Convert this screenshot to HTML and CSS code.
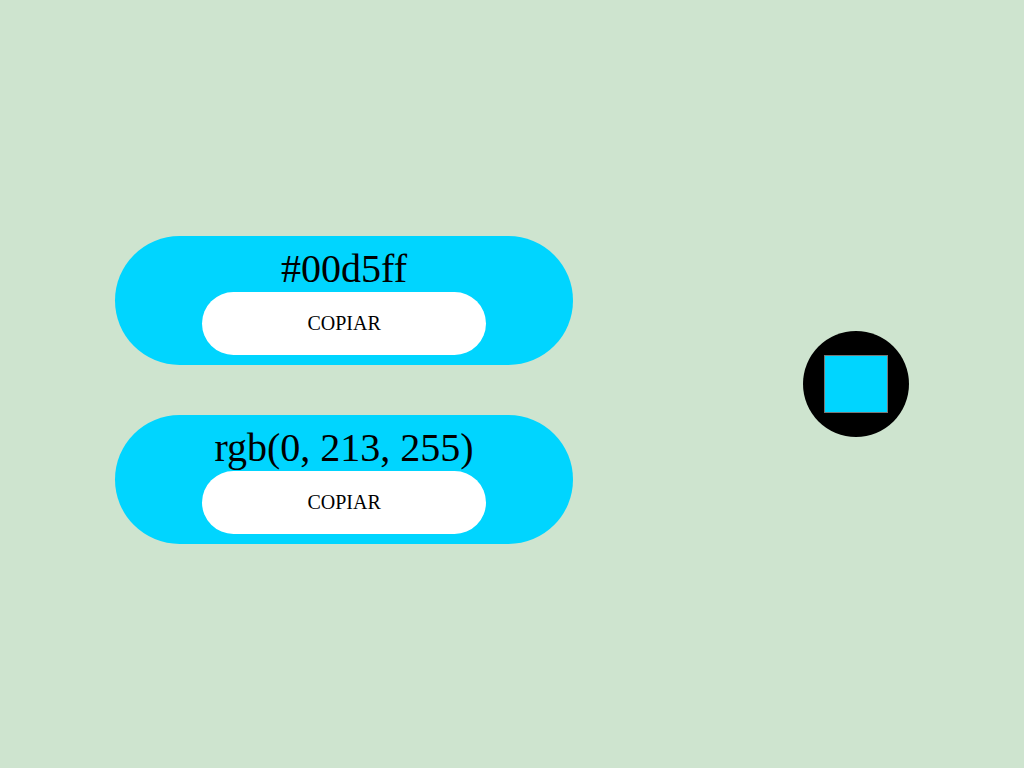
FILE: index.html
```html
<!DOCTYPE html>
<html lang="es">
<head>
<meta charset="utf-8">
<meta name="viewport" content="width=device-width, initial-scale=1">
<title>Selector de color</title>
<link rel="stylesheet" href="styles.css">
</head>
<body>
<main class="layout">
  <section class="codes">
    <div class="card">
      <p class="value">#00d5ff</p>
      <button class="copy" type="button">COPIAR</button>
    </div>
    <div class="card">
      <p class="value">rgb(0, 213, 255)</p>
      <button class="copy" type="button">COPIAR</button>
    </div>
  </section>
  <section class="picker">
    <input class="color" type="color" value="#00d5ff" aria-label="Color">
  </section>
</main>
</body>
</html>
```
FILE: styles.css
```css
* {
  box-sizing: border-box;
}

body {
  margin: 0;
  background: #cee4cf;
  color: #000;
  font-family: "Times New Roman", "Liberation Serif", serif;
}

.layout {
  display: grid;
  grid-template-columns: 67.2% 1fr;
  align-items: center;
  min-height: 100vh;
}

.codes {
  display: flex;
  flex-direction: column;
  align-items: center;
  gap: 50px;
  padding-top: 12px;
}

.card {
  display: flex;
  flex-direction: column;
  align-items: center;
  width: 458px;
  max-width: 90%;
  padding: 10px;
  border-radius: 65px;
  background: #00d5ff;
}

.value {
  margin: 0;
  font-size: 40px;
  line-height: 46px;
}

.copy {
  width: 284px;
  max-width: 100%;
  padding: 20px;
  border: 0;
  border-radius: 32px;
  background: #fff;
  color: #000;
  font-family: inherit;
  font-size: 20px;
  line-height: 23px;
  cursor: pointer;
}

.picker {
  display: flex;
  justify-content: center;
}

.color {
  width: 106px;
  height: 106px;
  padding: 20px 19px;
  border: 0;
  border-radius: 50%;
  background: #000;
  cursor: pointer;
}
```
